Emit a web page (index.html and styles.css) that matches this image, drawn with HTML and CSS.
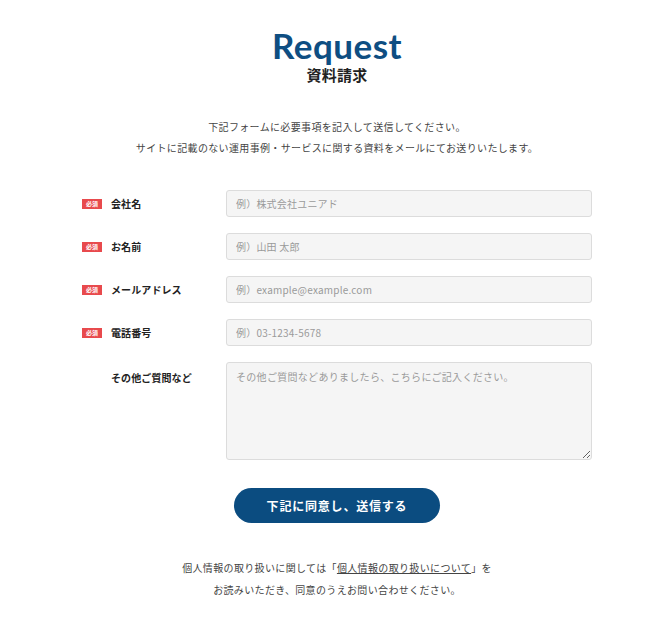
FILE: index.html
```html
<!DOCTYPE html>
<html lang="ja">
<head>
<meta charset="utf-8">
<title>Request 資料請求</title>
<link rel="stylesheet" href="styles.css">
</head>
<body>
<main class="page">
  <header class="head">
    <h1 class="title">Request</h1>
    <p class="subtitle">資料請求</p>
  </header>
  <div class="intro">
    <p>下記フォームに必要事項を記入して送信してください。</p>
    <p>サイトに記載のない運用事例・サービスに関する資料をメールにてお送りいたします。</p>
  </div>
  <form class="form">
    <div class="row">
      <div class="label"><span class="badge">必須</span><span class="name">会社名</span></div>
      <input class="field" type="text" placeholder="例）株式会社ユニアド">
    </div>
    <div class="row">
      <div class="label"><span class="badge">必須</span><span class="name">お名前</span></div>
      <input class="field" type="text" placeholder="例）山田 太郎">
    </div>
    <div class="row">
      <div class="label"><span class="badge">必須</span><span class="name">メールアドレス</span></div>
      <input class="field" type="text" placeholder="例）example@example.com">
    </div>
    <div class="row">
      <div class="label"><span class="badge">必須</span><span class="name">電話番号</span></div>
      <input class="field" type="text" placeholder="例）03-1234-5678">
    </div>
    <div class="row row-top">
      <div class="label label-top"><span class="badge-space"></span><span class="name">その他ご質問など</span></div>
      <textarea class="field area" placeholder="その他ご質問などありましたら、こちらにご記入ください。"></textarea>
    </div>
    <div class="actions">
      <button class="submit" type="button">下記に同意し、送信する</button>
    </div>
  </form>
  <div class="note">
    <p>個人情報の取り扱いに関しては「<a class="link" href="#">個人情報の取り扱いについて</a>」を</p>
    <p>お読みいただき、同意のうえお問い合わせください。</p>
  </div>
</main>
</body>
</html>
```

FILE: styles.css
```css
* { box-sizing: border-box; }
html, body { margin: 0; padding: 0; background: #fff; }
body {
  font-family: "Noto Sans CJK JP", "Noto Sans", sans-serif;
  color: #333;
}
p { margin: 0; }
.page {
  width: 510px;
  margin-left: 82px;
  padding-top: 25px;
  padding-bottom: 20px;
}
.head { text-align: center; }
.title {
  margin: 0;
  font-family: Lato, "Noto Sans", sans-serif;
  font-weight: 700;
  font-size: 35px;
  line-height: 40px;
  color: #0e4e82;
  letter-spacing: 0.5px;
}
.subtitle {
  margin-top: 0;
  font-size: 15px;
  font-weight: 700;
  line-height: 20px;
  color: #222;
  letter-spacing: 0.3px;
}
.intro {
  margin-top: 31px;
  text-align: center;
  font-size: 10px;
  line-height: 21px;
  letter-spacing: 0.35px;
  color: #444;
}
.form { margin-top: 32px; }
.row {
  display: flex;
  align-items: center;
  margin-bottom: 16px;
}
.row-top { align-items: flex-start; }
.label {
  width: 144px;
  flex: none;
  display: flex;
  align-items: center;
}
.label-top { padding-top: 8px; }
.badge {
  display: inline-flex;
  align-items: center;
  justify-content: center;
  width: 20px;
  height: 10px;
  background: #e84a4d;
  color: #fff;
  font-size: 6px;
  font-weight: 700;
  line-height: 1;
  margin-right: 9px;
}
.badge-space { width: 29px; flex: none; }
.name {
  font-size: 10px;
  font-weight: 700;
  color: #222;
  letter-spacing: 0.1px;
}
.field {
  flex: 1;
  height: 27px;
  border: 1px solid #dcdcdc;
  border-radius: 3px;
  background: #f5f5f5;
  padding: 0 9px;
  font-family: "Noto Sans CJK JP", "Noto Sans", sans-serif;
  font-size: 10px;
  letter-spacing: 0.2px;
  color: #333;
  outline: none;
}
.field::placeholder { color: #9a9a9a; }
.area {
  height: 98px;
  padding: 6px 9px;
  line-height: 16px;
  letter-spacing: 0.3px;
  resize: vertical;
}
.actions {
  display: flex;
  justify-content: center;
  margin-top: 28px;
}
.submit {
  width: 206px;
  height: 35px;
  border: none;
  border-radius: 18px;
  background: #0b4c80;
  color: #fff;
  font-family: "Noto Sans CJK JP", "Noto Sans", sans-serif;
  font-size: 12px;
  font-weight: 700;
  letter-spacing: 0.8px;
  cursor: pointer;
}
.note {
  margin-top: 34px;
  text-align: center;
  font-size: 10px;
  line-height: 22px;
  letter-spacing: 0.35px;
  color: #444;
}
.link { color: #444; text-decoration: underline; }
```
